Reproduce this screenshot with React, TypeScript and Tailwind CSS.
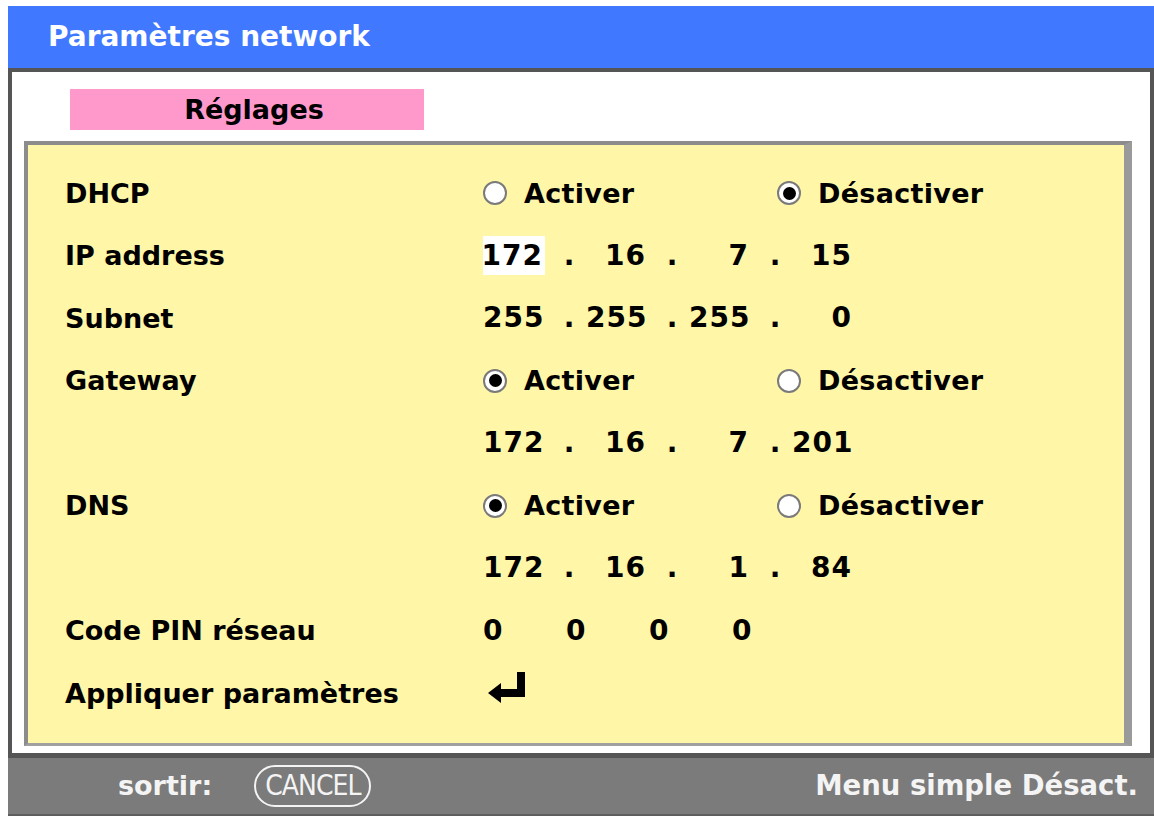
import type { ReactNode } from 'react'

const FONT = { fontFamily: '"DejaVu Sans", Verdana, sans-serif' }

function Radio({ checked = false }: { checked?: boolean }) {
  return (
    <span className="flex h-[24px] w-[24px] shrink-0 items-center justify-center rounded-full border-2 border-[#7a7a7a] bg-white">
      {checked && <span className="h-[13px] w-[13px] rounded-full bg-black" />}
    </span>
  )
}

function Choice({ checked, label }: { checked?: boolean; label: string }) {
  return (
    <div className="flex items-center gap-[17px]">
      <Radio checked={checked} />
      <span className="tracking-[0.3px]">{label}</span>
    </div>
  )
}

function Toggle({ on }: { on: boolean }) {
  return (
    <div className="flex items-center">
      <div className="w-[294px]">
        <Choice checked={on} label="Activer" />
      </div>
      <Choice checked={!on} label="Désactiver" />
    </div>
  )
}

function IpAddress({ octets, focus = false }: { octets: string[]; focus?: boolean }) {
  return (
    <div className="flex items-center text-[28px] tracking-[1px]">
      {octets.map((o, i) => (
        <div key={i} className="flex items-center">
          <span
            className={
              i === 0 && focus
                ? 'flex h-[39px] w-[62px] items-center justify-end bg-white pr-[2px]'
                : 'w-[62px] pr-[2px] text-right'
            }
          >
            {o}
          </span>
          {i < octets.length - 1 && (
            <span className="w-[41px] pl-[8px] text-center">.</span>
          )}
        </div>
      ))}
    </div>
  )
}

function EnterIcon() {
  return (
    <svg width="38" height="32" viewBox="0 0 38 32" className="mb-[10px] ml-[5px]">
      <path d="M29 0 H37 V25 H13 V31 L0 21 L13 11 V17 H29 Z" fill="#000" />
    </svg>
  )
}

function Row({ label, children }: { label?: string; children?: ReactNode }) {
  return (
    <div className="flex h-[62.5px] items-center">
      <div className="w-[418px] shrink-0">{label}</div>
      <div>{children}</div>
    </div>
  )
}

export default function App() {
  return (
    <div
      className="h-[818px] w-[1154px] overflow-hidden bg-white pl-[8px] pt-[6px] text-[27px] font-bold leading-none text-black"
      style={FONT}
    >
      <div className="flex h-[62px] items-center bg-[#4079ff] pl-[40px] text-[28px] text-white">
        Paramètres network
      </div>
      <div className="h-[4px] bg-[#555555]" />

      <div className="border-l-4 border-r-4 border-[#555555] bg-white pb-[7px] pl-[12px] pr-[18px] pt-[17px]">
        <div className="ml-[46px] flex h-[41px] w-[354px] items-center justify-center bg-[#ff99cc] pl-[14px]">
          Réglages
        </div>

        <div className="mt-[11px] border-b-[3px] border-l-4 border-r-[8px] border-t-4 border-b-[#a0a0a0] border-l-[#8c8c8c] border-r-[#9a9a9a] border-t-[#8c8c8c] bg-[#fff6a8] pb-[18px] pl-[37px] pt-[17px]">
          <Row label="DHCP">
            <Toggle on={false} />
          </Row>
          <Row label="IP address">
            <IpAddress octets={['172', '16', '7', '15']} focus />
          </Row>
          <Row label="Subnet">
            <IpAddress octets={['255', '255', '255', '0']} />
          </Row>
          <Row label="Gateway">
            <Toggle on />
          </Row>
          <Row>
            <IpAddress octets={['172', '16', '7', '201']} />
          </Row>
          <Row label="DNS">
            <Toggle on />
          </Row>
          <Row>
            <IpAddress octets={['172', '16', '1', '84']} />
          </Row>
          <Row label="Code PIN réseau">
            <div className="flex text-[28px]">
              {['0', '0', '0', '0'].map((d, i) => (
                <span key={i} className="w-[83px]">
                  {d}
                </span>
              ))}
            </div>
          </Row>
          <Row label="Appliquer paramètres">
            <EnterIcon />
          </Row>
        </div>
      </div>

      <div className="h-[5px] bg-[#555555]" />
      <div className="flex h-[58px] items-center justify-between border-b-2 border-[#5e5e5e] bg-[#7b7b7b] pl-[110px] pr-[16px] text-[#f4f4f4]">
        <div className="flex items-center gap-[42px]">
          <span>sortir:</span>
          <span
            className="flex h-[42px] items-center rounded-full border-2 border-[#f4f4f4] px-[9px] text-[28px] font-normal tracking-[-1px]"
            style={{ fontFamily: '"DejaVu Sans Condensed", "DejaVu Sans", sans-serif' }}
          >
            CANCEL
          </span>
        </div>
        <span className="text-[27.5px]">Menu simple Désact.</span>
      </div>
    </div>
  )
}
